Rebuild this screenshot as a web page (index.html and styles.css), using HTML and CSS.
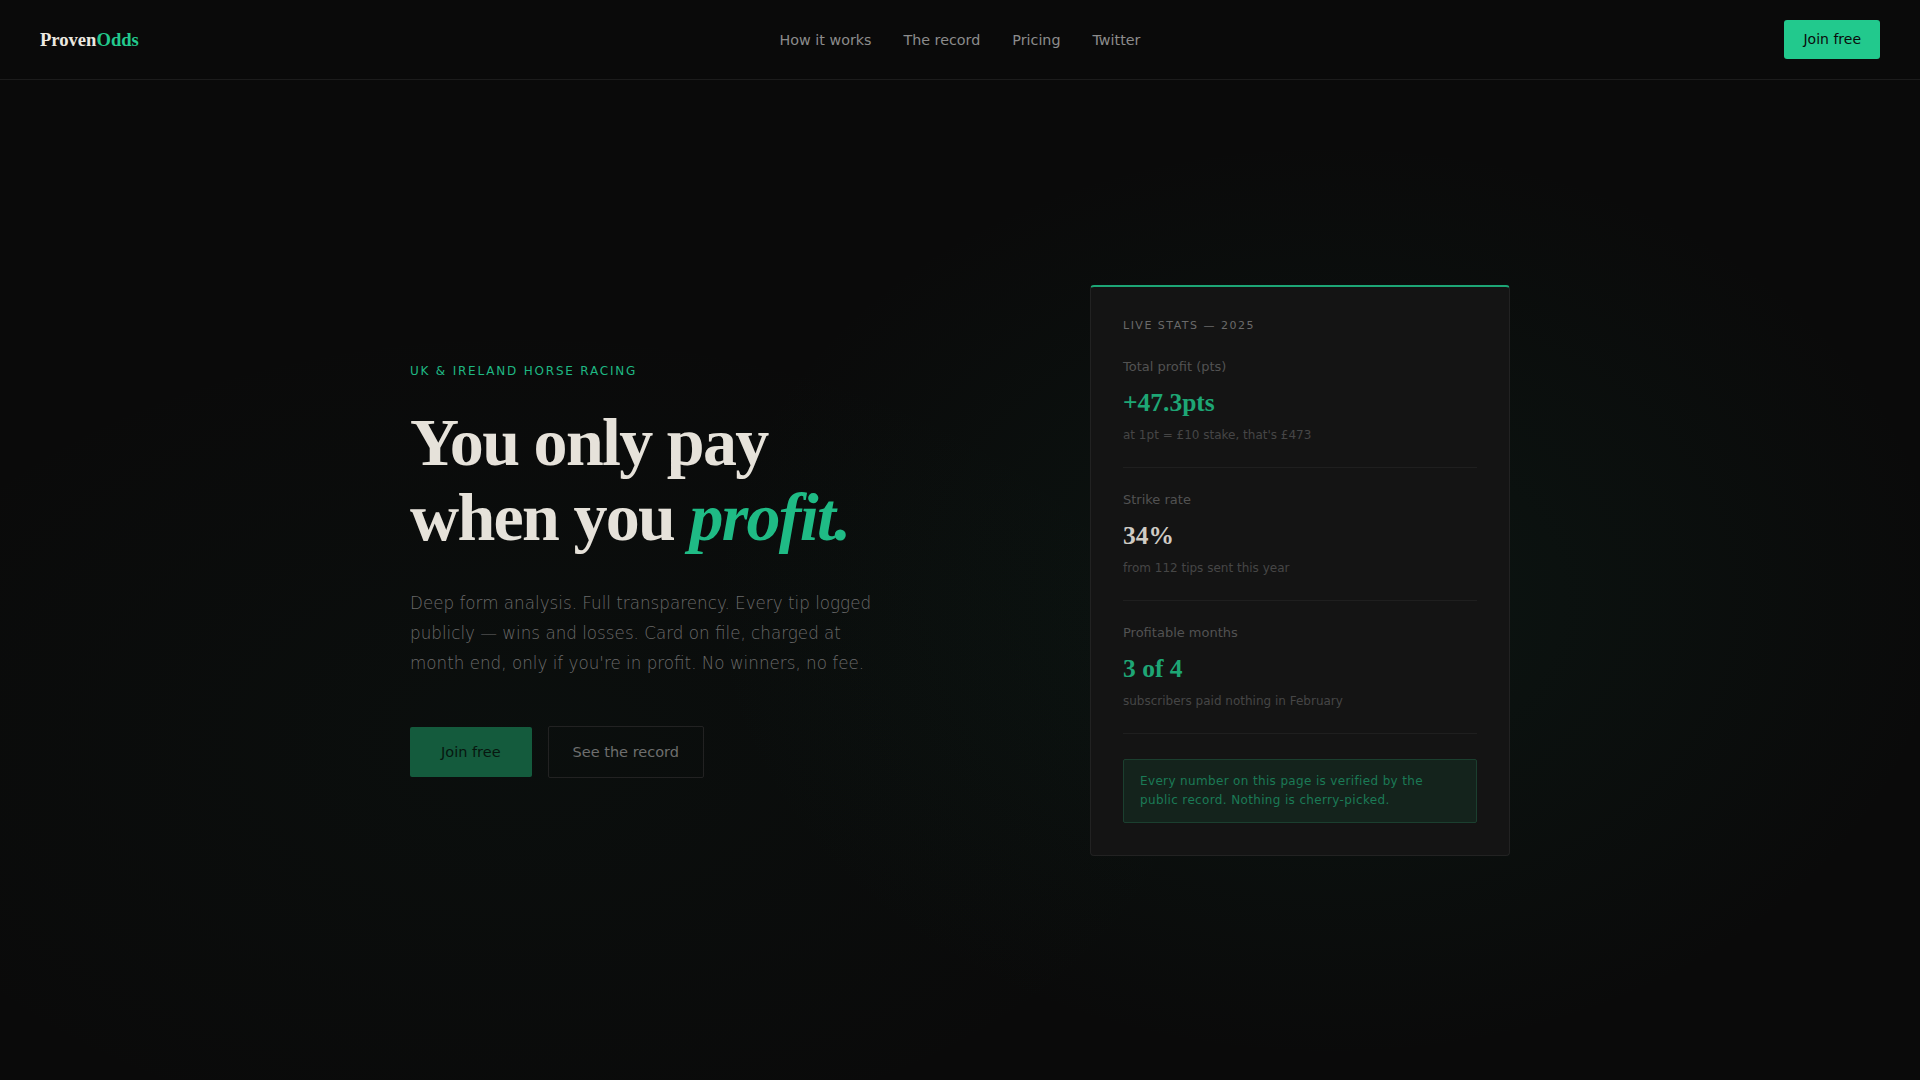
FILE: index.html
```html
<!DOCTYPE html>
<html lang="en">
<head>
<meta charset="utf-8">
<title>ProvenOdds</title>
<link rel="stylesheet" href="styles.css">
</head>
<body>
<header class="topbar">
  <a class="logo" href="#">Proven<span class="logo-accent">Odds</span></a>
  <nav class="nav">
    <a href="#">How it works</a>
    <a href="#">The record</a>
    <a href="#">Pricing</a>
    <a href="#">Twitter</a>
  </nav>
  <div class="top-actions">
    <a class="btn-top" href="#">Join free</a>
  </div>
</header>
<main class="hero">
  <div class="hero-inner">
    <div class="hero-copy">
      <p class="eyebrow">UK &amp; Ireland horse racing</p>
      <h1 class="headline">You only pay<br>when you <em>profit.</em></h1>
      <p class="lede">Deep form analysis. Full transparency. Every tip logged publicly — wins and losses. Card on file, charged at month end, only if you're in profit. No winners, no fee.</p>
      <div class="actions">
        <a class="btn-primary" href="#">Join free</a>
        <a class="btn-ghost" href="#">See the record</a>
      </div>
    </div>
    <aside class="card">
      <p class="card-title">Live stats — 2025</p>
      <div class="stat first">
        <p class="stat-label">Total profit (pts)</p>
        <p class="stat-value green">+47.3pts</p>
        <p class="stat-sub">at 1pt = £10 stake, that's £473</p>
      </div>
      <div class="stat">
        <p class="stat-label">Strike rate</p>
        <p class="stat-value">34%</p>
        <p class="stat-sub">from 112 tips sent this year</p>
      </div>
      <div class="stat">
        <p class="stat-label">Profitable months</p>
        <p class="stat-value green">3 of 4</p>
        <p class="stat-sub">subscribers paid nothing in February</p>
      </div>
      <p class="note">Every number on this page is verified by the public record. Nothing is cherry-picked.</p>
    </aside>
  </div>
</main>
</body>
</html>
```

FILE: styles.css
```css
* { box-sizing: border-box; }
html, body { margin: 0; padding: 0; }
body {
  background-color: #0a0a0a;
  background-image:
    radial-gradient(ellipse 620px 460px at 1330px 600px, rgba(24, 120, 88, 0.10), rgba(24, 120, 88, 0) 100%),
    radial-gradient(ellipse 700px 420px at 520px 740px, rgba(24, 120, 88, 0.045), rgba(24, 120, 88, 0) 100%);
  font-family: "DejaVu Sans", sans-serif;
  color: #e6e2da;
  min-height: 1080px;
}
a { text-decoration: none; }
p { margin: 0; }

.topbar {
  height: 80px;
  border-bottom: 1px solid #1c1c1c;
  display: grid;
  grid-template-columns: 1fr auto 1fr;
  align-items: center;
  padding: 0 40px;
}
.logo {
  justify-self: start;
  font-family: "Liberation Serif", serif;
  font-weight: 700;
  font-size: 18.6px;
  color: #ece8e0;
}
.logo-accent { color: #22c98d; }
.nav {
  display: flex;
  gap: 32px;
}
.nav a {
  color: #8c8c8c;
  font-size: 14.3px;
}
.top-actions {
  display: flex;
  justify-content: flex-end;
}
.btn-top {
  background: #22c98d;
  color: #0b0b0b;
  font-size: 14px;
  line-height: 19px;
  padding: 10px 19px;
  border-radius: 3px;
}

.hero {
  min-height: 1000px;
  display: flex;
  align-items: center;
  padding: 40px 0 60px;
}
.hero-inner {
  width: 1100px;
  margin: 0 auto;
  display: grid;
  grid-template-columns: 1fr 420px;
  align-items: center;
}
.eyebrow {
  color: #1fb883;
  font-size: 12px;
  line-height: 16px;
  letter-spacing: 1.8px;
  text-transform: uppercase;
  margin-bottom: 26px;
}
.headline {
  font-family: "Liberation Serif", serif;
  font-weight: 700;
  font-size: 68px;
  line-height: 75px;
  letter-spacing: -1.7px;
  color: #e6e2da;
  margin: 0 0 33px;
}
.headline em {
  color: #1fbb85;
  font-style: italic;
}
.lede {
  font-size: 16.75px;
  font-weight: 300;
  line-height: 30px;
  color: #6a6a6a;
  max-width: 480px;
  margin-bottom: 48px;
}
.actions {
  display: flex;
  gap: 16px;
  align-items: center;
}
.btn-primary {
  background: #145b3d;
  color: #07160f;
  font-size: 14.5px;
  line-height: 18px;
  padding: 16px 31px;
  border-radius: 2px;
}
.btn-ghost {
  border: 1px solid #222;
  color: #6e6e6e;
  font-size: 14.5px;
  line-height: 18px;
  padding: 16px 24px;
  border-radius: 2px;
}

.card {
  background: #141414;
  border: 1px solid #222;
  border-top: 2px solid #1da676;
  border-radius: 4px;
  padding: 32px;
}
.card-title {
  font-size: 11px;
  line-height: 14px;
  letter-spacing: 1.5px;
  text-transform: uppercase;
  color: #6a6a6a;
  margin-bottom: 26px;
}
.stat {
  padding: 24px 0;
  border-bottom: 1px solid #1f1f1f;
}
.stat.first { padding-top: 0; }
.stat-label {
  font-size: 13px;
  line-height: 16px;
  color: #525252;
  margin-bottom: 12px;
}
.stat-value {
  font-family: "Liberation Serif", serif;
  font-weight: 700;
  font-size: 25.5px;
  line-height: 32px;
  color: #cfcbc4;
  margin-bottom: 8px;
}
.stat-value.green { color: #1ea675; }
.stat-sub {
  font-size: 12px;
  line-height: 16px;
  color: #464646;
}
.note {
  margin-top: 25px;
  background: #14231c;
  border: 1px solid #1b3f2f;
  border-radius: 2px;
  padding: 12px 16px;
  font-size: 12px;
  line-height: 19px;
  letter-spacing: 0.35px;
  color: #1b7a56;
}
```
